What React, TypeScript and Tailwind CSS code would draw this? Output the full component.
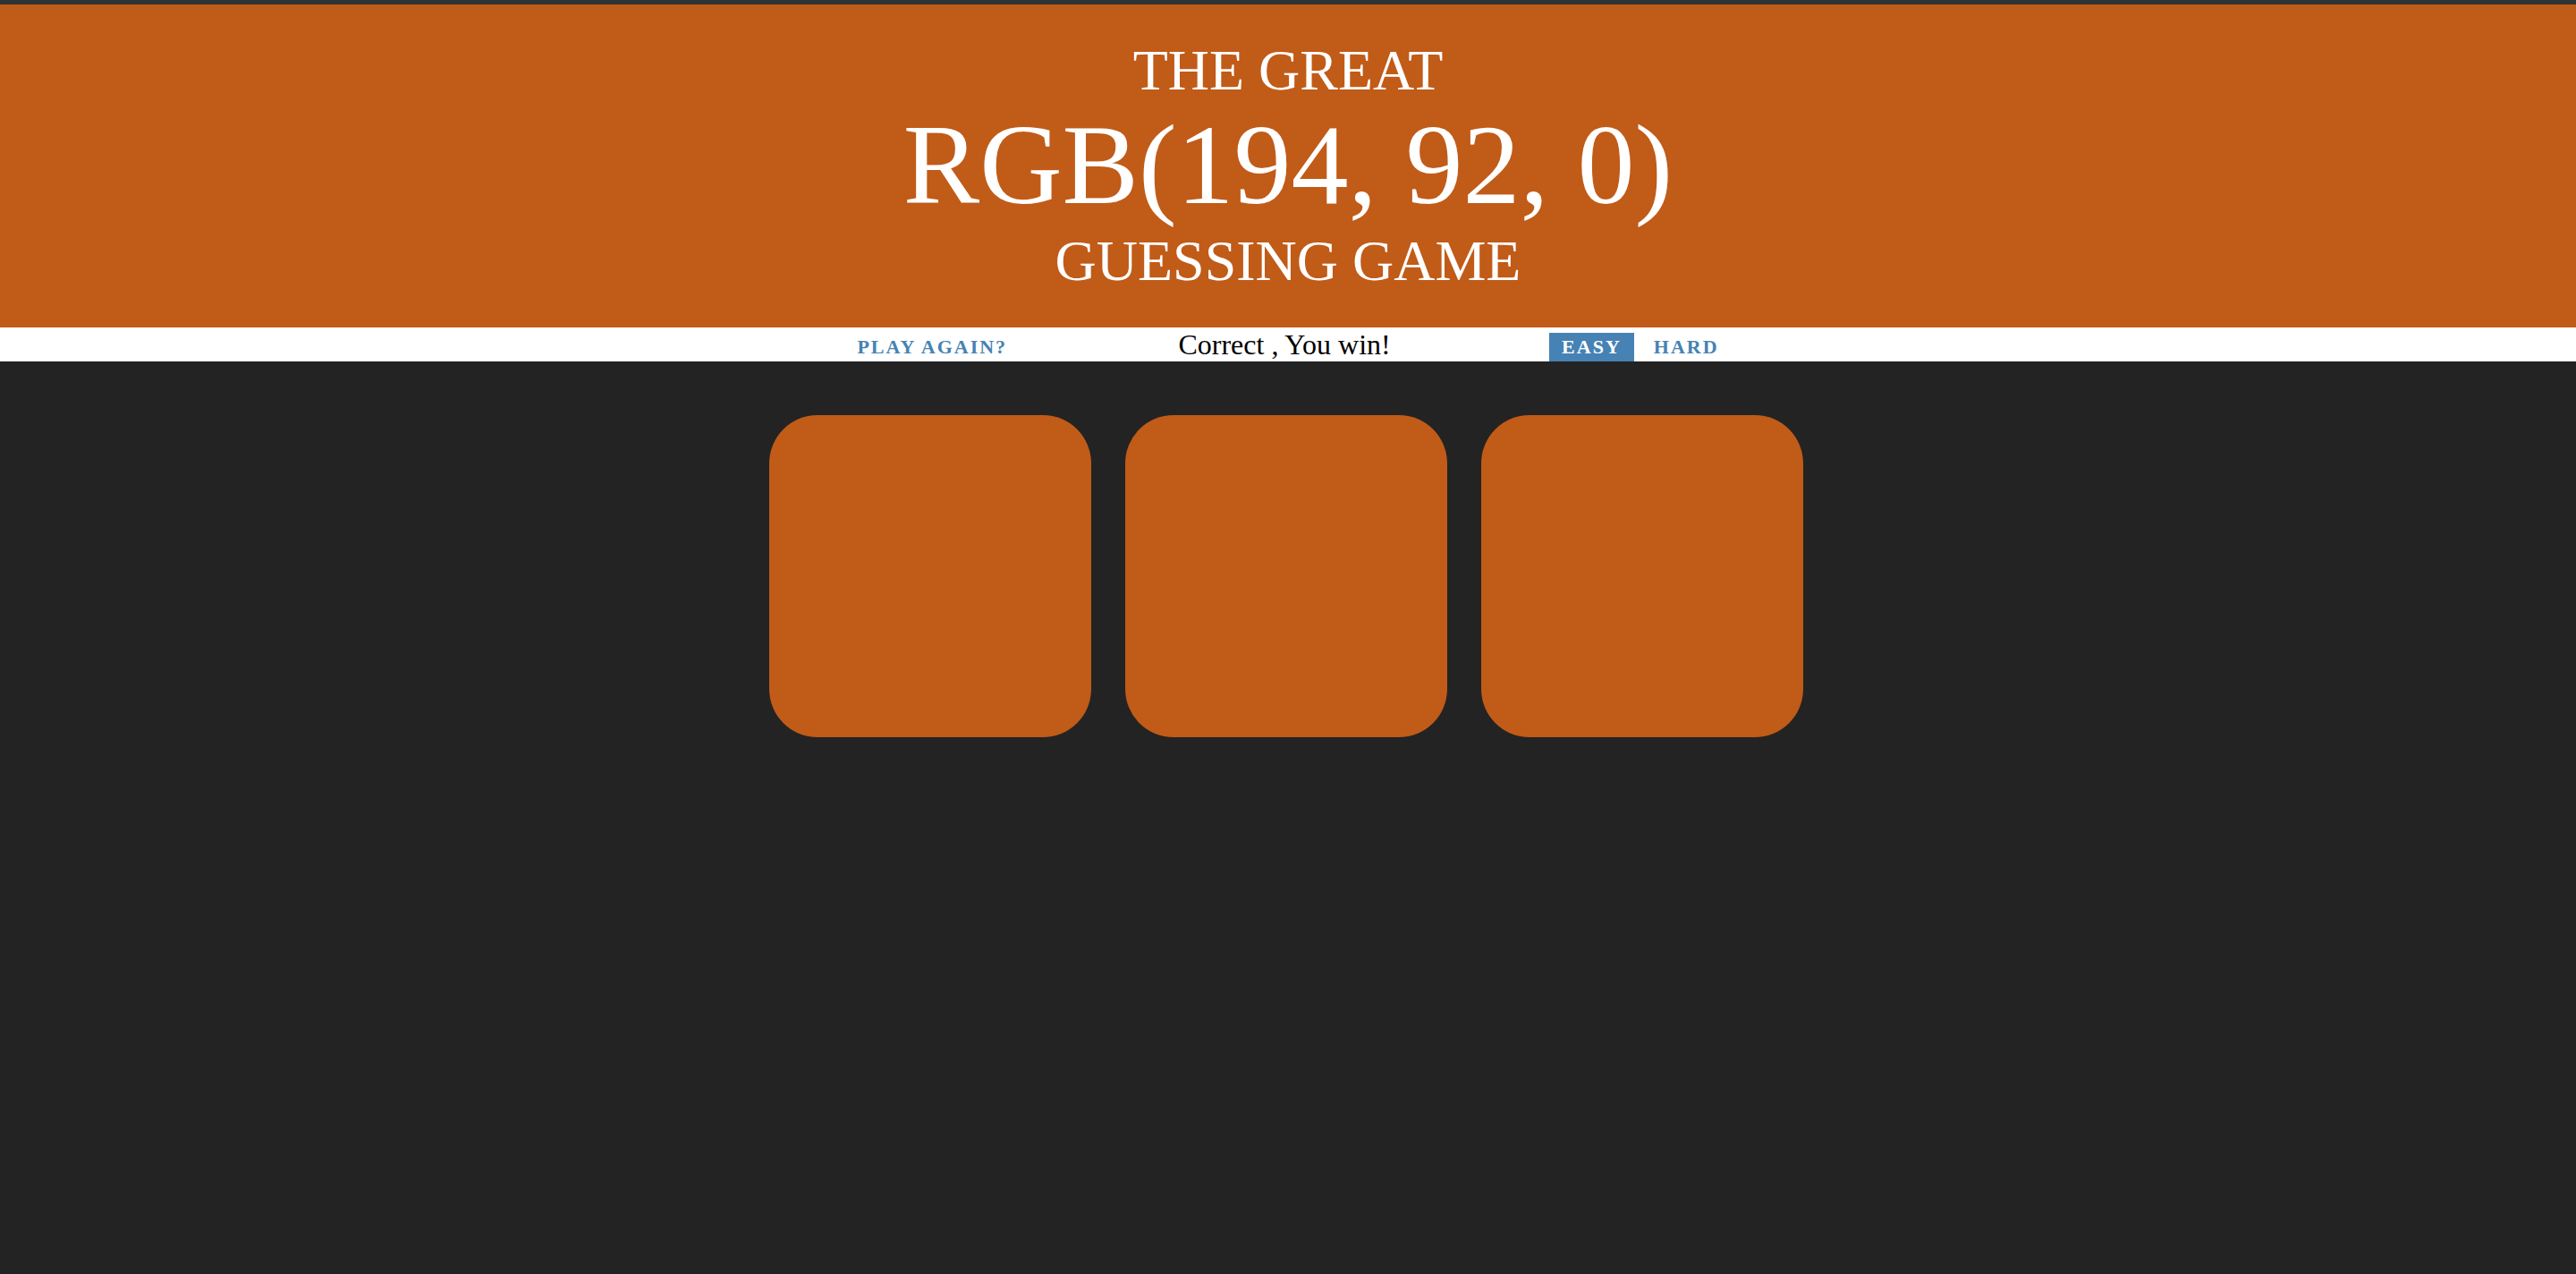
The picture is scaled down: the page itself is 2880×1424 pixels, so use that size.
export default function App() {
  const squares = [0, 1, 2];
  return (
    <div className="min-h-[1424px] w-full bg-[#232323] font-['Liberation_Serif','Times_New_Roman',serif]">
      <div className="h-[5px] bg-[#2e3336]" />
      <h1 className="m-0 bg-[#c15b18] pt-[38px] pb-[37px] text-center font-normal uppercase text-white">
        <div className="text-[64px] leading-[71px]">The Great</div>
        <div className="text-[128px] leading-[140px]">RGB(194, 92, 0)</div>
        <div className="text-[64px] leading-[75px]">Guessing Game</div>
      </h1>
      <div className="flex h-[38px] items-end justify-center gap-2 bg-white">
        <button className="h-[32px] px-[14px] text-[22px] font-bold uppercase leading-[normal] tracking-[2px] text-[#4682b4]">
          Play Again?
        </button>
        <span className="w-[576px] self-center text-center text-[32px] leading-[37px] text-black">
          Correct , You win!
        </span>
        <button className="h-[32px] bg-[#4682b4] px-[14px] text-[22px] font-bold uppercase leading-[normal] tracking-[2px] text-white">
          Easy
        </button>
        <button className="h-[32px] px-[14px] text-[22px] font-bold uppercase leading-[normal] tracking-[2px] text-[#4682b4]">
          Hard
        </button>
      </div>
      <div className="mx-auto mt-[60px] flex w-[1200px] gap-[38px] pl-[20px]">
        {squares.map((i) => (
          <div key={i} className="h-[360px] w-[360px] shrink-0 rounded-[54px] bg-[#c15b18]" />
        ))}
      </div>
    </div>
  );
}
